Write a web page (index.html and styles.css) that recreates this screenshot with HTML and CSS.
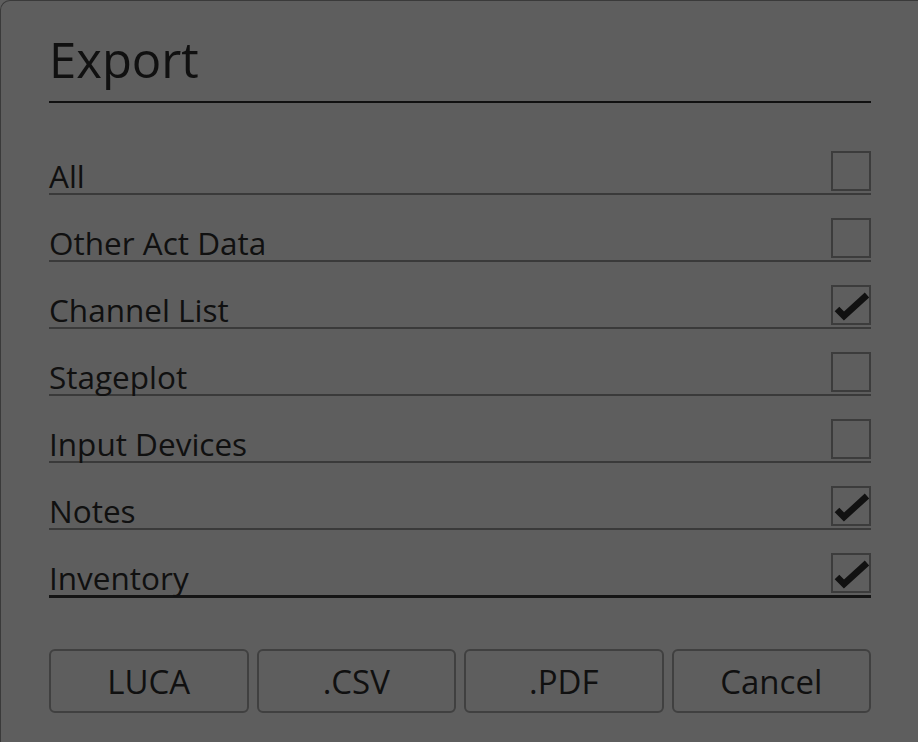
FILE: index.html
```html
<!DOCTYPE html>
<html>
<head>
<meta charset="utf-8">
<link rel="stylesheet" href="styles.css">
</head>
<body>
<div class="dialog">
  <h1 class="title">Export</h1>
  <div class="rows">
    <div class="row"><span class="label">All</span><span class="box"></span></div>
    <div class="row"><span class="label">Other Act Data</span><span class="box"></span></div>
    <div class="row"><span class="label">Channel List</span><span class="box checked"><svg viewBox="0 0 40 40" width="40" height="40"><polyline points="6,24 13,31 36,10" fill="none" stroke="#111" stroke-width="6.5" stroke-linejoin="miter"/></svg></span></div>
    <div class="row"><span class="label">Stageplot</span><span class="box"></span></div>
    <div class="row"><span class="label">Input Devices</span><span class="box"></span></div>
    <div class="row"><span class="label">Notes</span><span class="box checked"><svg viewBox="0 0 40 40" width="40" height="40"><polyline points="6,24 13,31 36,10" fill="none" stroke="#111" stroke-width="6.5" stroke-linejoin="miter"/></svg></span></div>
    <div class="row last"><span class="label">Inventory</span><span class="box checked"><svg viewBox="0 0 40 40" width="40" height="40"><polyline points="6,24 13,31 36,10" fill="none" stroke="#111" stroke-width="6.5" stroke-linejoin="miter"/></svg></span></div>
  </div>
  <div class="buttons">
    <button class="btn">LUCA</button>
    <button class="btn">.CSV</button>
    <button class="btn">.PDF</button>
    <button class="btn">Cancel</button>
  </div>
</div>
</body>
</html>
```

FILE: styles.css
```css
html, body {
  margin: 0;
  padding: 0;
  background: #5e5e5e;
  font-family: "Open Sans", "Noto Sans", sans-serif;
  color: #101010;
}
.dialog {
  box-sizing: border-box;
  width: 930px;
  height: 760px;
  border-top: 1px solid #3a3a3a;
  border-left: 1px solid #3a3a3a;
  border-top-left-radius: 10px;
  padding: 0 0 0 48px;
  background: #5e5e5e;
}
.title {
  width: 822px;
  margin: 0;
  font-weight: 400;
  font-size: 49px;
  line-height: 1;
  padding-top: 34px;
  height: 66px;
  border-bottom: 2px solid #111;
  box-sizing: content-box;
}
.rows {
  width: 822px;
  margin-top: 25px;
}
.row {
  height: 63px;
  display: flex;
  align-items: flex-end;
  justify-content: space-between;
  border-bottom: 2px solid #3a3a3a;
  padding-bottom: 2px;
  box-sizing: content-box;
}
.row.last {
  border-bottom: 3px solid #141414;
}
.label {
  font-size: 31.5px;
  line-height: 1;
  padding-bottom: 0;
}
.box {
  width: 36px;
  height: 36px;
  border: 2px solid #3c3c3c;
  display: block;
  position: relative;
}
.box svg {
  position: absolute;
  left: -2px;
  top: -2px;
}
.buttons {
  width: 822px;
  display: flex;
  gap: 8px;
  margin-top: 51px;
}
.btn {
  flex: 1;
  height: 64px;
  border: 2px solid #404040;
  border-radius: 6px;
  background: transparent;
  font-family: "Open Sans", "Noto Sans", sans-serif;
  font-size: 33px;
  color: #101010;
  padding: 0;
}
```
